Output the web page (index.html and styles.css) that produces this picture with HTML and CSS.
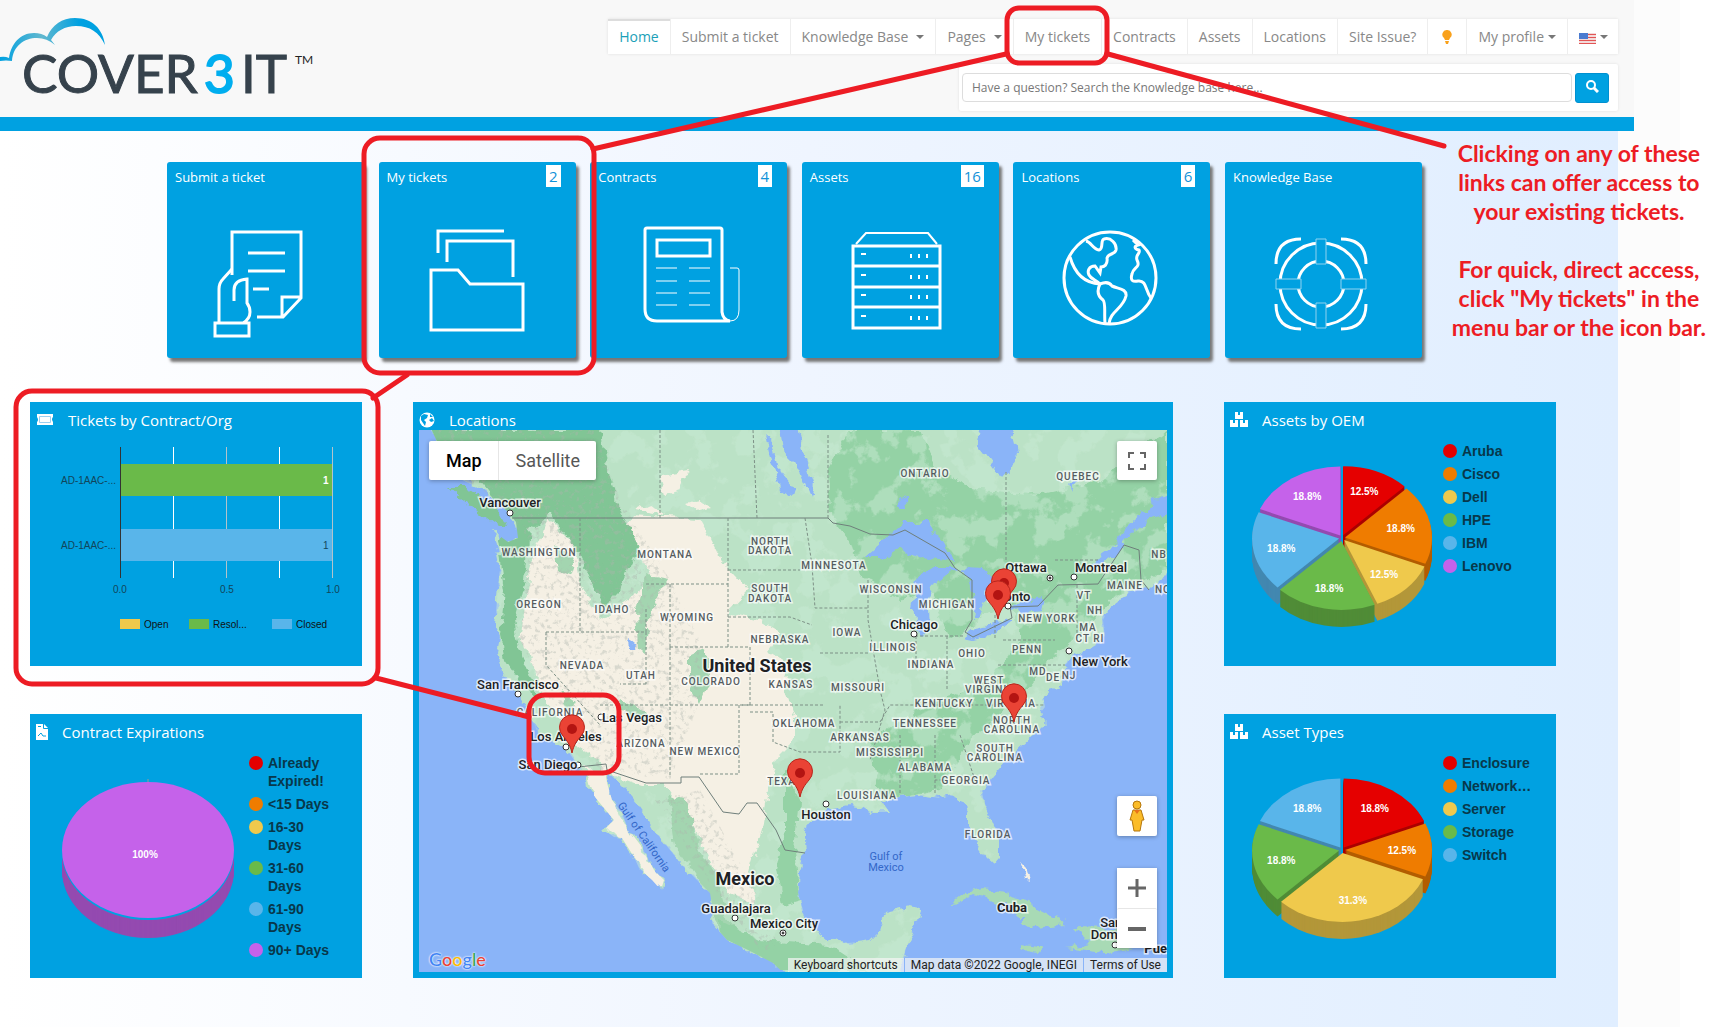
FILE: index.html
```html
<!DOCTYPE html>
<html lang="en">
<head>
    <meta charset="UTF-8">
    <meta name="viewport" content="width=device-width, initial-scale=1.0">
    <title>Cover3 IT - Customer Portal</title>
    <link rel="stylesheet" href="styles.css">
</head>
<body>
    <header class="header">
        <a class="logo" href="#" aria-label="Cover3 IT">
            <svg width="330" height="117" viewBox="0 0 330 117">
                <defs>
                    <linearGradient id="cloud" x1="0" x2="105" y1="0" y2="0" gradientUnits="userSpaceOnUse">
                        <stop offset="0" stop-color="#00a1e1"/>
                        <stop offset="0.4" stop-color="#62b8cf"/>
                        <stop offset="0.75" stop-color="#00a1e1"/>
                    </linearGradient>
                </defs>
                <path fill="url(#cloud)" d="M0 57Q5 56 9 58C11 44 20 33 34 33Q42 33 47 37C52 25 62 18 75 18C92 18 103 29 105 45C99 32 90 26 76 26C65 26 56 31 51 40L55 45Q47 38 37 38C24 38 13 46 12 61Q6 60 0 61Z"/>
                <g class="logo-text">
                    <text x="22" y="93">COVER</text>
                    <text x="204" y="93" class="logo-three">3</text>
                    <text x="241" y="93">IT</text>
                    <text x="295" y="64" class="logo-tm">TM</text>
                </g>
            </svg>
        </a>
        <div class="header-right">
            <nav class="nav">
                <a class="active" href="#">Home</a>
                <a href="#">Submit a ticket</a>
                <a href="#">Knowledge Base <span class="caret wide"></span></a>
                <a href="#">Pages <span class="caret wide"></span></a>
                <a href="#">My tickets</a>
                <a href="#">Contracts</a>
                <a href="#">Assets</a>
                <a href="#">Locations</a>
                <a href="#">Site Issue?</a>
                <a href="#" aria-label="Ideas">
                    <svg class="bulb" width="16" height="14" viewBox="0 0 16 14"><path fill="#f9a11b" d="M8 0a4.500 4.500 0 0 1 3 8L10 10H6L5 8A4.500 4.500 0 0 1 8 0ZM6 11h4l-1 3H7Z"/></svg>
                </a>
                <a href="#">My profile<span class="caret"></span></a>
                <a href="#" aria-label="Language">
                    <svg class="flag" width="17" height="11" viewBox="0 0 17 11">
                        <path fill="#f3dada" d="M0 0h17v11H0z"/>
                        <path stroke="#e25555" d="M0 1.500h17M0 4.500h17M0 7.500h17M0 10.500h17"/>
                        <path fill="#4a7bd0" d="M0 0h9v6H0z"/>
                    </svg><span class="caret"></span>
                </a>
            </nav>
            <form class="search">
                <input type="text" aria-label="Search the knowledge base" placeholder="Have a question? Search the Knowledge base here...">
                <button type="button" aria-label="Search">
                    <svg width="14" height="14" viewBox="0 0 14 14" fill="none" stroke="#fff"><circle cx="6" cy="6" r="4" stroke-width="2"/><path d="M9 9l4 4" stroke-width="3"/></svg>
                </button>
            </form>
        </div>
    </header>

    <main class="main">
        <!-- Icon bar -->
        <div class="tiles">
            <a class="tile" href="#">
                <span class="tile-head">Submit a ticket</span>
                <svg viewBox="0 40 197 157">
                    <path d="M65 113V70H134V136L116 155H90M115 154V135H134M81 91H118M81 109H118M86 127H102"/>
                    <path d="M65 107L56 117Q52 121 52 127V161M67 139V128Q67 118 80 117V141Q83 145 83 150Q83 157 76 161M48 161H82V174H48Z"/>
                </svg>
            </a>
            <a class="tile" href="#">
                <span class="tile-head">My tickets <b>2</b></span>
                <svg viewBox="0 40 197 157">
                    <path d="M59 91V69H125M68 100V79H134V115M52 108H79L91 122H144V168H52Z"/>
                </svg>
            </a>
            <a class="tile" href="#">
                <span class="tile-head">Contracts <b>4</b></span>
                <svg viewBox="0 40 197 157">
                    <path d="M57 66H130Q132 66 132 68V150Q133 158 140 159H67Q55 159 55 147V68Q55 66 57 66ZM67 78H120V94H67Z"/>
                    <path class="thin" d="M66 106H87M66 119H87M66 131H87M66 143H87M99 106H120M99 119H120M99 131H120M99 143H120M140 106H147Q149 106 149 108V148Q149 159 140 159"/>
                </svg>
            </a>
            <a class="tile" href="#">
                <span class="tile-head">Assets <b>16</b></span>
                <svg viewBox="0 40 197 157">
                    <path class="mid" d="M54 82L64 71H126L135 82"/>
                    <path d="M51 84H138V166H51ZM51 104H138M51 125H138M51 145H138"/>
                    <path class="mid" d="M59 92h5M59 113h5M59 133h5M59 154h5M109 92v4M117 92v4M125 92v4M109 113v4M117 113v4M125 113v4M109 133v4M117 133v4M125 133v4M109 154v4M117 154v4M125 154v4"/>
                </svg>
            </a>
            <a class="tile" href="#">
                <span class="tile-head">Locations <b>6</b></span>
                <svg viewBox="0 40 197 157">
                    <circle cx="97" cy="116" r="46"/>
                    <path d="M73 79C78 80 80 87 86 88C91 87 87 78 91 77C98 75 104 82 103 88C102 93 95 91 94 96C95 103 91 105 88 105L87 111L82 104C76 104 74 109 76 113C78 117 83 118 87 122M57 95C61 109 70 121 87 122M87 122C94 119 97 121 99 124C106 127 114 127 113 134C110 147 97 149 96 162M87 122C83 130 86 135 90 138C93 141 91 152 92 161"/>
                    <path d="M120 78L125 83C121 84 121 87 126 88C128 92 122 92 124 98C128 106 120 105 119 112C117 119 120 120 125 119C134 118 132 129 138 136"/>
                </svg>
            </a>
            <a class="tile" href="#">
                <span class="tile-head">Knowledge Base</span>
                <svg viewBox="0 40 197 157">
                    <circle cx="96" cy="122" r="41"/>
                    <circle cx="96" cy="122" r="23"/>
                    <path d="M51 102Q51 77 76 77M116 77Q141 77 141 102M51 142Q51 167 76 167M116 167Q141 167 141 142"/>
                    <path class="strap" d="M91 77h10v25H91ZM91 141h10v25H91ZM51 117h25v10H51ZM116 117h25v10h-25Z"/>
                </svg>
            </a>
        </div>

        <!-- Dashboard panels -->
        <div class="dashboard">
            <section class="panel">
                <h2>
                    <svg width="18" height="13" viewBox="0 0 18 13"><path fill="#fff" d="M1 1h16v3q-2 2 0 5v3H1V9q2-2 0-5Z"/><path fill="none" stroke="#9ccff0" d="M3.500 3.500h11v6h-11z"/></svg>
                    Tickets by Contract/Org
                </h2>
                <svg class="bars" viewBox="0 28 332 236">
                    <path stroke="#fff" d="M143.500 45V176M249.500 45V176"/>
                    <path stroke="#b3c3cb" d="M196.500 45V176M302.500 45V176"/>
                    <path fill="#6aba49" d="M91 62H302V94H91z"/>
                    <path fill="#59b5ea" d="M91 127H302V159H91z"/>
                    <path stroke="#333" d="M90.500 45V176"/>
                    <g class="axis">
                        <text x="31" y="82">AD-1AAC-...</text>
                        <text x="31" y="147">AD-1AAC-...</text>
                        <text x="83" y="191">0.0</text>
                        <text x="190" y="191">0.5</text>
                        <text x="296" y="191">1.0</text>
                        <text x="293" y="82" class="light">1</text>
                        <text x="293" y="147">1</text>
                        <text x="114" y="226" class="key">Open</text>
                        <text x="183" y="226" class="key">Resol...</text>
                        <text x="266" y="226" class="key">Closed</text>
                    </g>
                    <path fill="#efc94c" d="M90 217h20v10H90z"/>
                    <path fill="#6aba49" d="M159 217h20v10h-20z"/>
                    <path fill="#59b5ea" d="M242 217h20v10h-20z"/>
                </svg>
            </section>

            <section class="panel panel-map">
                <h2>
                    <svg width="16" height="16" viewBox="0 0 16 16"><circle cx="8" cy="8" r="7.500" fill="#fff"/><path fill="#00a1e1" d="M2 4L5 2L9 3L8 6L5 8L7 10L6 14L4 11L2 8ZM10 8L13 6L15 9L12 10ZM11 2L14 5L11 5Z"/></svg>
                    Locations
                </h2>
                <div class="map">
                    <svg class="map-canvas" viewBox="419 430 748 542" preserveAspectRatio="xMidYMid slice">
                        <defs>
                            <filter id="rough" x="0" y="0" width="100%" height="100%">
                                <feTurbulence type="fractalNoise" baseFrequency="0.09" numOctaves="3" seed="4"/>
                                <feDisplacementMap in="SourceGraphic" scale="11" xChannelSelector="R" yChannelSelector="G"/>
                            </filter>
                            <filter id="patchy" x="0" y="0" width="100%" height="100%">
                                <feTurbulence type="fractalNoise" baseFrequency="0.035" numOctaves="5" seed="9"/>
                                <feColorMatrix values="0 0 0 0 0.58  0 0 0 0 0.82  0 0 0 0 0.65  14 0 0 0 -7.300"/>
                                <feComposite in2="SourceGraphic" operator="in"/>
                            </filter>
                            <filter id="relief" x="0" y="0" width="100%" height="100%">
                                <feTurbulence type="fractalNoise" baseFrequency="0.2" numOctaves="4" seed="2"/>
                                <feColorMatrix values="0 0 0 0 0.42  0 0 0 0 0.46  0 0 0 0 0.42  0 5 0 0 -2.700"/>
                                <feComposite in2="SourceGraphic" operator="in"/>
                            </filter>
                            <path id="mainland" d="M427 420L440 448L448 470L462 480L480 488L495 500L508 512L516 522L518 538L508 542L493 531L500 565L497 600L495 625L500 637L497 653L503 673L512 688L521 700L532 720L538 733L551 742L566 748L574 760L584 773L587 787L599 802L614 820L604 830L614 837L622 838L634 857L639 868L652 880L661 890L664 880L654 870L647 857L642 847L629 830L622 813L612 800L607 783L606 774L612 775L624 787L637 803L647 817L654 830L670 850L682 865L697 880L710 893L713 910L712 923L727 940L748 950L773 963L793 982H899L906 947L914 930L921 910L909 908L886 913L881 930L871 940L848 943L828 940L813 927L803 910L798 893L800 873L804 853L803 837L810 823L820 813L833 808L848 805L863 807L873 812L889 812L884 803L899 797L919 795L939 798L949 795L962 800L969 813L969 827L977 843L987 857L994 863L999 857L999 840L992 823L984 803L982 790L992 777L1007 760L1022 747L1037 733L1047 723L1038 716L1045 707L1043 697L1052 687L1057 690L1062 675L1070 657L1090 647L1105 638L1103 620L1110 607L1123 597L1140 588L1150 587L1160 577L1180 571V420Z"/>
                            <clipPath id="land"><use href="#mainland"/></clipPath>
                            <g id="pin">
                                <path fill="#ea4335" stroke="#b8251c" d="M0 0C-2-9-5-12-9-17A12.500 12.500 0 1 1 9-17C5-12 2-9 0 0Z"/>
                                <circle cy="-24" r="5" fill="#b31412"/>
                            </g>
                        </defs>
                        <rect x="400" y="420" width="800" height="580" fill="#8ab4f8"/>
                        <g filter="url(#rough)">
                            <use href="#mainland" fill="#bbe2c6"/>
                            <path fill="#81c595" d="M450 487L465 487L488 503L500 513L508 528L500 528L480 513L460 498Z"/>
                            <path fill="#a8dab5" d="M950 903L964 892L984 888L1010 893L1035 907L1065 923L1035 927L1022 925V917L1000 903L974 894L959 902ZM1075 928L1150 930L1141 947L1105 953L1065 947L1090 943ZM1020 945L1042 947L1038 953L1025 951Z"/>
                            <path fill="#f5f0e4" d="M1020 860L1026 866L1030 880L1026 878Z"/>
                        </g>
                        <g clip-path="url(#land)">
                            <!-- northern and eastern forests -->
                            <path filter="url(#rough)" fill="#94d2a5" d="M828 470L850 430H920L935 470L980 490L1040 495L1100 480L1167 430V570L1110 600L1075 640L1050 660L1020 700L970 740L940 790L880 800L870 740L900 720L940 700L990 680L1020 640L1010 600L950 640L930 590L900 600L860 575L850 540L830 515Z"/>
                            <rect x="419" y="430" width="748" height="542" opacity="0.500" filter="url(#patchy)"/>
                            <g filter="url(#rough)">
                                <!-- dry west -->
                                <path fill="#f5f0e4" d="M622 535L632 515L700 519L712 540L722 560L735 575L748 590L727 612L760 620L782 632L768 652L790 665L785 690L795 715L795 740L775 760L768 790L762 830L750 870L755 905L730 895L710 860L690 820L665 785L640 785L612 775L600 762L575 745L560 720L540 690L530 655L520 640L526 600L530 570L542 535L548 518L575 545L580 580L600 620L630 600L650 575L640 550ZM636 510L650 503L665 515ZM660 475L690 470L680 490L665 495ZM685 503L700 500L710 507L695 511ZM585 765L604 775L620 815L650 865L668 885L655 890L630 850L600 820Z"/>
                                <!-- Rockies and the Pacific ranges -->
                                <path fill="#81c595" d="M427 430L600 430L608 470L620 510L640 545L620 590L605 605L590 580L575 545L550 515L530 530L525 580L515 620L520 650L540 700L525 690L505 660L500 635L505 590L498 540L512 520L480 480L445 460Z"/>
                                <path fill="#a3d5b0" d="M645 575L668 580L650 610L645 655L638 650L636 610ZM690 655L705 648L710 680L700 705L690 685ZM620 700L650 715L645 722L618 708ZM668 795L685 800L700 850L718 880L728 920L760 955L720 935L705 890L675 845ZM555 545L575 560L570 575L558 570ZM560 690L575 700L570 715Z"/>
                                <path fill="#94d2a5" d="M785 770L800 800L795 850L800 900L782 905L776 870L785 830ZM720 920L760 940L830 945L870 972H780L720 940Z"/>
                            </g>
                            <path opacity="0.400" filter="url(#relief)" d="M427 430L595 430L620 500L670 580L700 640L700 700L670 780L600 770L560 720L520 640L530 540L450 470ZM655 800L700 790L760 900L780 950H760L700 870Z"/>
                        </g>
                        <g fill="#8ab4f8" filter="url(#rough)">
                            <path d="M980 425L977 443L990 460L1003 478L1013 467L1017 453L1010 425Z"/>
                            <path d="M865 557L890 535L905 522L927 522L932 533L945 540L948 553L957 563L937 560L920 558L907 555L900 548L887 557Z"/>
                            <path d="M918 577L933 568L957 568L947 575L933 583L928 597L930 623L923 637L915 630L912 607Z"/>
                            <path d="M960 567L990 570L997 590L985 600L980 620L973 620L975 600L970 580Z"/>
                            <path d="M963 637L973 628L990 625L1012 617L1010 623L990 635L973 639Z"/>
                            <path d="M1010 608L1020 602L1043 597L1040 610L1020 613Z"/>
                            <path d="M1180 492L1153 500L1143 513L1127 527L1110 550L1092 562L1096 566L1115 555L1133 532L1150 518L1180 510Z"/>
                            <path d="M780 425L798 425L805 460L814 485L811 497L800 470L785 455ZM766 435L772 440L778 470L794 490L792 496L780 488L772 460ZM899 497L907 495L908 510L901 510ZM626 638L635 645L634 650L627 648ZM1070 485L1078 478L1072 492Z"/>
                        </g>
                        <g class="borders">
                            <path d="M512 518H828L833 523L850 526L870 534L893 535L905 530L945 553L955 568L972 580V620L965 632L973 637L1012 618L1010 607L1038 606L1058 585L1098 584L1124 545L1139 550L1141 580L1149 590M578 767L606 764L607 770L646 783H681V777H699L723 812L739 814L747 803H757L776 830L785 850L805 853"/>
                            <path class="dashed" d="M580 518V632M546 632H646V607M646 632V684M546 632V665L600 725M646 584H728V518M728 584V647M670 584V647M670 647H750V705M670 647V776M646 684H620M600 705H825M739 705V774H700M728 570H800M728 617H790L812 625M805 518L812 565L815 608H868M820 653H868M828 518V435M660 518V430M757 518L753 430M750 705H740M750 712H773V742L800 752H840V705M840 722H880L890 705H1045M916 636V670M947 636V690M915 636H963M995 615V640M1003 640H1055M998 665H1065M1006 560V470M868 580V620L880 690L885 710L870 760M900 735V795M935 735V795M960 735L975 780H935M1077 585V640M1055 560H1100"/>
                        </g>
                        <g class="states">
                            <text x="539" y="556">WASHINGTON</text><text x="665" y="558">MONTANA</text>
                            <text x="539" y="608">OREGON</text><text x="612" y="613">IDAHO</text>
                            <text x="687" y="621">WYOMING</text><text x="582" y="669">NEVADA</text>
                            <text x="641" y="679">UTAH</text><text x="711" y="685">COLORADO</text>
                            <text x="770" y="545">NORTH</text><text x="770" y="554">DAKOTA</text>
                            <text x="770" y="592">SOUTH</text><text x="770" y="602">DAKOTA</text>
                            <text x="780" y="643">NEBRASKA</text><text x="791" y="688">KANSAS</text>
                            <text x="925" y="477">ONTARIO</text><text x="1078" y="480">QUEBEC</text>
                            <text x="834" y="569">MINNESOTA</text><text x="891" y="593">WISCONSIN</text>
                            <text x="947" y="608">MICHIGAN</text><text x="847" y="636">IOWA</text>
                            <text x="893" y="651">ILLINOIS</text><text x="931" y="668">INDIANA</text>
                            <text x="972" y="657">OHIO</text><text x="1027" y="653">PENN</text>
                            <text x="1047" y="622">NEW YORK</text><text x="1084" y="599">VT</text>
                            <text x="1095" y="614">NH</text><text x="1088" y="631">MA</text>
                            <text x="1090" y="642">CT RI</text><text x="1125" y="589">MAINE</text>
                            <text x="1159" y="558">NB</text><text x="1163" y="593">NO</text>
                            <text x="1038" y="675">MD</text><text x="1053" y="681">DE</text>
                            <text x="1069" y="679">NJ</text><text x="858" y="691">MISSOURI</text>
                            <text x="989" y="684">WEST</text><text x="990" y="693">VIRGINIA</text>
                            <text x="1011" y="707">VIRGINIA</text><text x="944" y="707">KENTUCKY</text>
                            <text x="925" y="727">TENNESSEE</text><text x="1012" y="724">NORTH</text>
                            <text x="1012" y="733">CAROLINA</text><text x="860" y="741">ARKANSAS</text>
                            <text x="804" y="727">OKLAHOMA</text><text x="890" y="756">MISSISSIPPI</text>
                            <text x="995" y="752">SOUTH</text><text x="995" y="761">CAROLINA</text>
                            <text x="925" y="771">ALABAMA</text><text x="966" y="784">GEORGIA</text>
                            <text x="867" y="799">LOUISIANA</text><text x="785" y="785">TEXAS</text>
                            <text x="988" y="838">FLORIDA</text><text x="705" y="755">NEW MEXICO</text>
                            <text x="641" y="747">ARIZONA</text><text x="550" y="716">CALIFORNIA</text>
                        </g>
                        <g class="dots">
                            <circle cx="510" cy="513" r="3"/><circle cx="518" cy="694" r="3"/>
                            <circle cx="601" cy="717" r="3"/><circle cx="566" cy="747" r="3"/>
                            <circle cx="578" cy="765" r="3"/><circle cx="826" cy="804" r="3"/>
                            <circle cx="914" cy="634" r="3"/><circle cx="1050" cy="578" r="3"/>
                            <circle cx="1074" cy="577" r="3"/><circle cx="1008" cy="606" r="3"/>
                            <circle cx="1069" cy="651" r="3"/><circle cx="735" cy="918" r="3"/>
                            <circle cx="783" cy="933" r="3"/><circle cx="1115" cy="945" r="3"/>
                            <circle class="capital" cx="1050" cy="578" r="1"/><circle class="capital" cx="783" cy="933" r="1"/>
                        </g>
                        <g class="cities">
                            <text x="510" y="507">Vancouver</text><text x="518" y="689">San Francisco</text>
                            <text x="632" y="722">Las Vegas</text><text x="566" y="741">Los Angeles</text>
                            <text x="548" y="769">San Diego</text><text x="826" y="819">Houston</text>
                            <text x="914" y="629">Chicago</text><text x="1026" y="572">Ottawa</text>
                            <text x="1101" y="572">Montreal</text><text x="1008" y="601">Toronto</text>
                            <text x="1100" y="666">New York</text><text x="1012" y="912" class="country-small">Cuba</text>
                            <text x="736" y="913">Guadalajara</text><text x="784" y="928">Mexico City</text>
                            <text x="1117" y="927">Santo</text><text x="1117" y="939">Domingo</text>
                            <text x="1164" y="953" class="country-small">Puerto</text>
                            <text x="757" y="672" class="country">United States</text>
                            <text x="745" y="885" class="country">Mexico</text>
                        </g>
                        <g class="seas">
                            <text x="886" y="860">Gulf of</text><text x="886" y="871">Mexico</text>
                            <text transform="translate(641 839) rotate(55)">Gulf of California</text>
                        </g>
                        <use href="#pin" x="572" y="753"/>
                        <use href="#pin" x="800" y="797"/>
                        <use href="#pin" x="1014" y="722"/>
                        <use href="#pin" x="1004" y="607"/>
                        <use href="#pin" x="998" y="619"/>
                    </svg>
                    <div class="map-type">
                        <button type="button" class="on">Map</button>
                        <button type="button">Satellite</button>
                    </div>
                    <button type="button" class="map-full" aria-label="Toggle fullscreen">
                        <svg width="18" height="18" viewBox="0 0 18 18" fill="none" stroke="#666" stroke-width="2"><path d="M1 6V1H6M12 1H17V6M17 12V17H12M6 17H1V12"/></svg>
                    </button>
                    <div class="map-side">
                        <button type="button" aria-label="Street View">
                            <svg width="18" height="32" viewBox="0 0 18 32"><path fill="#fbbc29" stroke="#b5770c" d="M5 10H13L16 20H14L12 31H6L4 20H2Z"/><circle cx="9" cy="5" r="4" fill="#fbbc29" stroke="#b5770c"/><path fill="#e8711a" d="M6 10h6l-3 4z"/></svg>
                        </button>
                        <div class="map-zoom">
                            <button type="button" aria-label="Zoom in"><svg width="18" height="18" viewBox="0 0 18 18" stroke="#666" stroke-width="3"><path d="M0 9H18M9 0V18"/></svg></button>
                            <button type="button" aria-label="Zoom out"><svg width="18" height="18" viewBox="0 0 18 18" stroke="#666" stroke-width="4"><path d="M0 9H18"/></svg></button>
                        </div>
                    </div>
                    <div class="google"><span class="g-blue">G</span><span class="g-red">o</span><span class="g-yellow">o</span><span class="g-blue">g</span><span class="g-green">l</span><span class="g-red">e</span></div>
                    <div class="map-legal">
                        <a href="#">Keyboard shortcuts</a>
                        <span>Map data ©2022 Google, INEGI</span>
                        <a href="#">Terms of Use</a>
                    </div>
                </div>
            </section>

            <section class="panel">
                <h2>
                    <svg class="boxes" width="18" height="16" viewBox="0 0 18 16"><path fill="#fff" d="M5 0h3v3h2V0h3v7H5ZM0 8h3v3h2V8h3v7H0ZM10 8h3v3h2V8h3v7h-8Z"/></svg>
                    Assets by OEM
                </h2>
                <div class="pie-chart" data-chart="oem"></div>
            </section>

            <section class="panel">
                <h2>
                    <svg width="12" height="16" viewBox="0 0 12 16"><path fill="#fff" d="M0 0h8l4 4v12H0Z"/><path fill="none" stroke="#00a1e1" d="M2 2.500h3M7.500 0v4.500H12M2 12l3-3 2 3h3"/></svg>
                    Contract Expirations
                </h2>
                <div class="pie-chart" data-chart="expirations"></div>
            </section>

            <section class="panel">
                <h2>
                    <svg class="boxes" width="18" height="16" viewBox="0 0 18 16"><path fill="#fff" d="M5 0h3v3h2V0h3v7H5ZM0 8h3v3h2V8h3v7H0ZM10 8h3v3h2V8h3v7h-8Z"/></svg>
                    Asset Types
                </h2>
                <div class="pie-chart" data-chart="types"></div>
            </section>
        </div>
    </main>

    <!-- Help callouts drawn over the page -->
    <svg class="callouts" viewBox="0 0 1709 1027" preserveAspectRatio="xMinYMin">
        <rect x="1007" y="8" width="100" height="55" rx="12"/>
        <rect x="364" y="138" width="230" height="235" rx="16"/>
        <rect x="16" y="391" width="362" height="293" rx="16"/>
        <rect x="529" y="695" width="90" height="78" rx="16"/>
        <path d="M1006 54L593 149M1108 54L1444 146M407 375L373 398M376 678L529 717"/>
    </svg>
    <aside class="help-text">
        <p>Clicking on any of these<br>links can offer access to<br>your existing tickets.</p>
        <p>For quick, direct access,<br>click "My tickets" in the<br>menu bar or the icon bar.</p>
    </aside>

    <script>
        const colors = ['#e50000', '#ef7c00', '#efc94c', '#6aba49', '#59b5ea', '#c562ea'];
        const shades = ['#ab0000', '#b35d00', '#b39739', '#508c37', '#4388b0', '#944ab0'];

        const charts = {
            oem: [['Aruba', 2], ['Cisco', 3], ['Dell', 2], ['HPE', 3], ['IBM', 3], ['Lenovo', 3]],
            types: [['Enclosure', 3], ['Network…', 2], ['Server', 5], ['Storage', 3], ['Switch', 3]],
            expirations: [['Already Expired!', 0], ['<15 Days', 0], ['16-30 Days', 0], ['31-60 Days', 0], ['61-90 Days', 0], ['90+ Days', 1]]
        };

        const cx = 118, cy = 108, rx = 87, ry = 69, depth = 17;

        // Path of one slice, pushed a little out of the centre
        function slicePath(start, end, drop) {
            const mid = (start + end) / 2;
            const x = cx + Math.sin(mid) * 3;
            const y = cy - Math.cos(mid) * 3 + drop;
            const x1 = x + Math.sin(start) * rx, y1 = y - Math.cos(start) * ry;
            const x2 = x + Math.sin(end) * rx, y2 = y - Math.cos(end) * ry;
            const large = end - start > Math.PI ? 1 : 0;
            return `M${x} ${y}L${x1} ${y1}A${rx} ${ry} 0 ${large} 1 ${x2} ${y2}Z`;
        }

        function drawPie(data) {
            const total = data.reduce((sum, d) => sum + d[1], 0);
            let out = '', angle = 0;

            const full = data.findIndex(d => d[1] === total);
            if (full >= 0) {
                for (let d = depth + 3; d > 0; d--) {
                    out += `<ellipse cx="${cx}" cy="${cy + d}" rx="86" ry="68" fill="${d < 3 ? '#00a1e1' : shades[full]}"/>`;
                }
                out += `<path d="M${cx} 37v4" stroke="#999"/>`;
                out += `<ellipse cx="${cx}" cy="${cy}" rx="86" ry="68" fill="${colors[full]}"/>`;
                out += `<text x="${cx - 3}" y="${cy + 8}">100%</text>`;
                return out;
            }

            const slices = data.map((d, i) => {
                const start = angle;
                angle += d[1] / total * 2 * Math.PI;
                return { start, end: angle, i, label: (Math.round(d[1] / total * 1000) / 10).toFixed(1) + '%' };
            });
            for (let d = depth; d > 0; d--) {
                slices.forEach(s => out += `<path d="${slicePath(s.start, s.end, d)}" fill="${shades[s.i]}"/>`);
            }
            slices.forEach(s => out += `<path d="${slicePath(s.start, s.end, 0)}" fill="${colors[s.i]}"/>`);
            slices.forEach(s => {
                const mid = (s.start + s.end) / 2;
                out += `<text x="${cx - 1 + Math.sin(mid) * rx * 0.7}" y="${cy + 4 - Math.cos(mid) * ry * 0.74}">${s.label}</text>`;
            });
            return out;
        }

        document.querySelectorAll('.pie-chart').forEach(el => {
            const data = charts[el.dataset.chart];
            const items = data.map((d, i) => `<li><i style="background:${colors[i]}"></i><span>${d[0].replace('<', '&lt;')}</span></li>`);
            el.innerHTML = `<svg viewBox="0 0 219 236">${drawPie(data)}</svg><ul>${items.join('')}</ul>`;
        });
    </script>
</body>
</html>
```
FILE: styles.css
```css
* {
    box-sizing: border-box;
}

body {
    margin: 0;
    min-height: 100vh;
    position: relative;
    font-family: "Open Sans", sans-serif;
    font-size: 14px;
    background: linear-gradient(to right, #fcfcfc calc(100% - 29px), #fff 0);
}

a {
    color: inherit;
    text-decoration: none;
}

button {
    font-family: inherit;
    border: none;
    padding: 0;
    cursor: pointer;
}

/* Header */
.header {
    display: flex;
    justify-content: space-between;
    margin-right: 75px;
    padding-right: 16px;
    height: 131px;
    background: #f8f8f8;
    border-bottom: 14px solid #00a1e1;
}

.logo-text {
    fill: #36424c;
    stroke: #36424c;
    font: 53px Lato, sans-serif;
}

.logo-three {
    fill: #00aeef;
    stroke: #00aeef;
    stroke-width: 2px;
}

.logo-tm {
    fill: #222;
    stroke: none;
    font-size: 12px;
}

.header-right {
    display: flex;
    flex-direction: column;
    align-items: flex-end;
    padding-top: 19px;
}

.nav {
    display: flex;
    height: 35px;
    background: #fff;
    box-shadow: 0 0 3px rgba(0, 0, 0, 0.1);
    color: #888;
}

.nav a {
    display: flex;
    align-items: center;
    padding: 0 11px;
    border-right: 1px solid #eee;
    white-space: nowrap;
}

.nav a:last-child {
    padding-right: 10px;
    border-right: none;
}

.nav .active {
    color: #1b9fb8;
    box-shadow: inset 0 2px #ddd;
}

.caret {
    margin-left: 4px;
    border: 4px solid transparent;
    border-top-color: #777;
    border-bottom: 0;
}

.caret.wide {
    margin-left: 8px;
}

.flag {
    margin-top: 4px;
}

.search {
    display: flex;
    align-items: center;
    gap: 3px;
    width: 659px;
    height: 47px;
    margin-top: 10px;
    padding: 0 9px 0 3px;
    background: #fff;
    border-radius: 2px;
    box-shadow: 0 0 3px rgba(0, 0, 0, 0.1);
}

.search input {
    flex: 1;
    height: 29px;
    padding: 0 9px;
    border: 1px solid #ddd;
    border-radius: 4px;
    font-family: inherit;
    font-size: 12px;
    background: #fff;
}

.search input::placeholder {
    color: #777;
}

.search button {
    width: 34px;
    height: 30px;
    background: #00a1e1;
    border: 1px solid #0090d0;
    border-radius: 3px;
}

/* Page content */
.main {
    margin-right: 91px;
    min-height: calc(100vh - 131px);
    padding: 31px 62px 49px 30px;
    background: linear-gradient(to right, #fff, #eff5ff 50%, #e0eeff);
}

.tiles {
    display: flex;
    justify-content: space-between;
    margin: 0 134px 0 137px;
}

.tile {
    width: 197px;
    height: 196px;
    background: #00a1e1;
    border-radius: 3px;
    box-shadow: 3px 4px 3px #777;
    color: #fff;
    font-size: 13px;
}

.tile-head {
    display: flex;
    justify-content: space-between;
    height: 40px;
    padding: 3px 15px 0 8px;
    line-height: 24px;
}

.tile-head b {
    height: 22px;
    padding: 0 3px;
    background: #fff;
    color: #1292d8;
    font-size: 15px;
    line-height: 22px;
    font-weight: normal;
}

.tile svg {
    display: block;
    fill: none;
    stroke: #fff;
    stroke-width: 3;
}

.tile .mid {
    stroke-width: 2;
}

.tile .thin {
    stroke-width: 1;
}

.tile .strap {
    fill: #00a1e1;
    stroke: #8fd2f0;
    stroke-width: 1;
}

/* Dashboard */
.dashboard {
    display: grid;
    grid-template-columns: 332fr 760fr 332fr;
    gap: 48px 51px;
    margin-top: 44px;
}

.panel {
    min-height: 264px;
    background: #00a1e1;
}

.panel-map {
    grid-row: span 2;
    display: flex;
    flex-direction: column;
    padding: 0 6px 6px;
}

.panel h2 {
    display: flex;
    align-items: center;
    gap: 14px;
    height: 28px;
    margin: 0;
    padding: 7px 6px 0;
    color: #fff;
    font-size: 15px;
    font-weight: normal;
    line-height: 20px;
}

.panel-map h2 {
    padding: 7px 0 0;
}

.bars {
    display: block;
}

.axis text {
    fill: #12455a;
    font: 10px "Liberation Sans", sans-serif;
}

.axis .light {
    fill: #fff;
    font-weight: bold;
}

.axis .key {
    fill: #111;
}

.pie-chart {
    display: grid;
    grid-template-columns: minmax(0, 219fr) minmax(0, 113fr);
}

.pie-chart text {
    fill: #fff;
    font: bold 10px "Liberation Sans", sans-serif;
    text-anchor: middle;
}

.pie-chart ul {
    display: flex;
    flex-direction: column;
    gap: 5px;
    margin: 0;
    padding: 12px 30px 0 0;
    list-style: none;
    color: #08384b;
    font: bold 14px/18px "Liberation Sans", sans-serif;
}

.pie-chart li {
    display: flex;
    gap: 5px;
}

.pie-chart i {
    flex: none;
    width: 14px;
    height: 14px;
    margin-top: 2px;
    border-radius: 50%;
}

/* Map */
.map {
    position: relative;
    flex: 1;
    overflow: hidden;
    font-family: Roboto, sans-serif;
}

.map-canvas {
    position: absolute;
    width: 100%;
    height: 100%;
}

.borders {
    fill: none;
    stroke: #6f7f7b;
}

.borders .dashed {
    stroke: #7d9086;
    stroke-dasharray: 3 2;
}

.states text,
.cities text {
    text-anchor: middle;
    paint-order: stroke;
    stroke: #fff;
    stroke-opacity: 0.7;
    stroke-width: 3px;
}

.states text {
    font-size: 10px;
    font-weight: 500;
    letter-spacing: 1px;
    fill: #555c60;
}

.cities text {
    font-size: 13px;
    font-weight: 500;
    fill: #202124;
}

.cities .country {
    font-size: 18px;
    font-weight: bold;
}

.cities .country-small {
    font-weight: bold;
}

.seas text {
    font-size: 11px;
    text-anchor: middle;
    fill: #3367c8;
}

.dots circle {
    fill: #fff;
    stroke: #333;
}

.dots .capital {
    fill: #333;
}

.map-type,
.map-full,
.map-side button {
    background: #fff;
    border-radius: 2px;
    box-shadow: 0 1px 4px rgba(0, 0, 0, 0.3);
}

.map button {
    display: flex;
    align-items: center;
    justify-content: center;
}

.map-type {
    position: absolute;
    left: 10px;
    top: 11px;
    display: flex;
    height: 39px;
}

.map-type button {
    padding: 0 16px 0 17px;
    background: none;
    color: #565656;
    font-size: 18px;
}

.map-type .on {
    color: #000;
    font-weight: 500;
    border-right: 1px solid #e6e6e6;
}

.map-full {
    position: absolute;
    right: 10px;
    top: 11px;
    width: 40px;
    height: 39px;
}

.map-side {
    position: absolute;
    right: 10px;
    bottom: 24px;
    display: flex;
    flex-direction: column;
    gap: 32px;
}

.map-side button {
    width: 40px;
    height: 40px;
}

.map-zoom {
    background: #fff;
    box-shadow: 0 1px 4px rgba(0, 0, 0, 0.3);
}

.map-zoom button {
    box-shadow: none;
}

.map-zoom button + button {
    border-top: 1px solid #e6e6e6;
}

.google {
    position: absolute;
    left: 10px;
    bottom: 1px;
    font: 500 18px/24px Lato, sans-serif;
    text-shadow: 0 0 2px #fff, 0 0 2px #fff;
}

.g-blue {
    color: #4285f4;
}

.g-red {
    color: #ea4335;
}

.g-yellow {
    color: #fbbc05;
}

.g-green {
    color: #34a853;
}

.map-legal {
    position: absolute;
    right: 0;
    bottom: 0;
    display: flex;
    gap: 1px;
    font-size: 12px;
    line-height: 14px;
    color: #222;
}

.map-legal > * {
    padding: 0 6px;
    background: rgba(245, 245, 245, 0.7);
}

/* Callouts */
.callouts {
    position: absolute;
    top: 0;
    left: 0;
    width: 100%;
    fill: none;
    stroke: #ed1c24;
    stroke-width: 5;
    stroke-linecap: round;
    pointer-events: none;
}

.help-text {
    position: absolute;
    top: 139px;
    right: 3px;
    color: #ed1c24;
    font: bold 23px/29px Lato, sans-serif;
    text-align: center;
}

.help-text p {
    margin: 0 0 29px;
}
```
